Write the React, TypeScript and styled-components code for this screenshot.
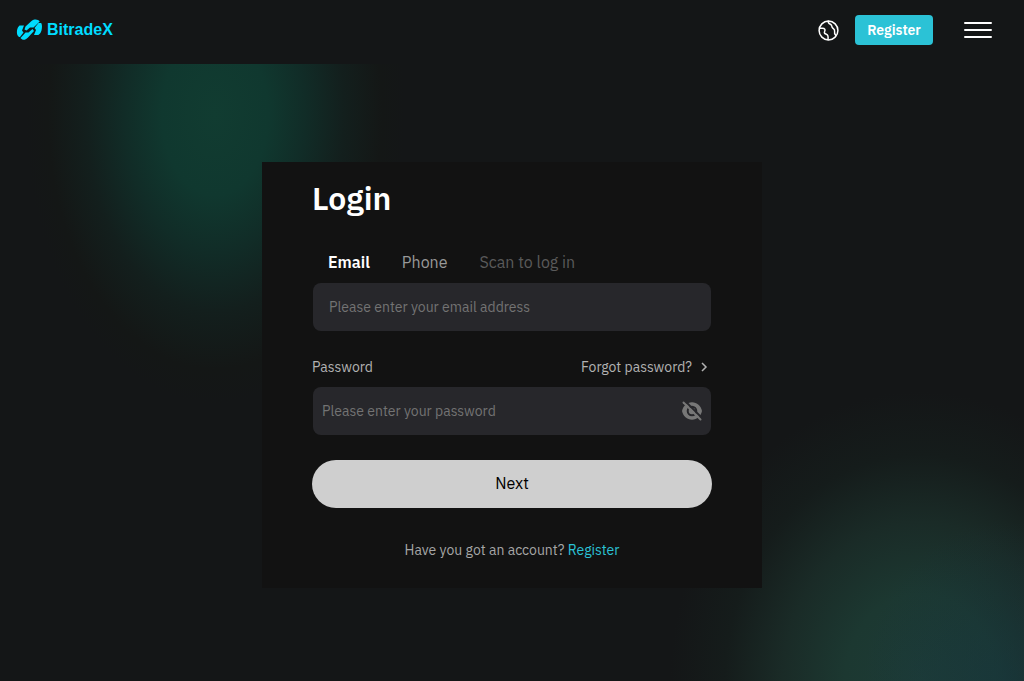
import React from "react";
import styled, { createGlobalStyle } from "styled-components";

const GlobalStyle = createGlobalStyle`
  *, *::before, *::after { box-sizing: border-box; }
  body {
    margin: 0;
    background: #141617;
    color: #fff;
    font-family: "IBM Plex Sans", Roboto, "Liberation Sans", sans-serif;
    font-size: 14px;
    line-height: 20px;
  }
  button, input { font: inherit; }
  a { text-decoration: none; }
`;

const Page = styled.div`
  min-height: 100vh;
  display: flex;
  flex-direction: column;
`;

const Header = styled.header`
  display: flex;
  align-items: center;
  justify-content: space-between;
  height: 64px;
  padding: 0 32px 4px 16px;
`;

const Brand = styled.a`
  display: flex;
  align-items: center;
  gap: 4px;
  color: #00dcff;
  font: bold 16px/24px "Liberation Sans", Arial, sans-serif;
`;

const HeaderActions = styled.div`
  display: flex;
  align-items: center;
`;

const IconButton = styled.button`
  display: flex;
  padding: 0;
  border: 0;
  background: none;
  color: inherit;
  cursor: pointer;
`;

const RegisterButton = styled.button`
  height: 30px;
  width: 78px;
  margin: 0 31px 0 16px;
  padding: 0;
  border: 0;
  border-radius: 4px;
  background: #2bc2d6;
  color: #fff;
  font-weight: 600;
  cursor: pointer;
`;

const Main = styled.main`
  flex: 1;
  display: flex;
  justify-content: center;
  align-items: flex-start;
  padding: 98px 16px 93px;
  background:
    radial-gradient(190px 290px at 215px 50px, #113c31 0%, #10382f 28%, #112c27 48%, #131f1d 68%, #141716 88%, rgba(20, 22, 23, 0) 100%),
    radial-gradient(140px 160px at calc(100% - 20px) 100%, rgba(20, 54, 70, 0.4), rgba(20, 54, 70, 0)),
    radial-gradient(250px 290px at calc(100% - 104px) 100%, #1d3b36 0%, #1c3831 30%, #1a2b27 55%, #151c1b 78%, #141617 100%);
`;

const Card = styled.form`
  width: 100%;
  max-width: 500px;
  padding: 16px 50px 28px;
  background: #121212;
`;

const Title = styled.h1`
  margin: 0 0 32px;
  font-size: 32px;
  line-height: 40px;
  font-weight: 600;
`;

const Tabs = styled.div`
  display: flex;
  gap: 32px;
  padding: 0 16px;
  margin-bottom: 9px;
`;

const Tab = styled.button<{ $tone: string; $active?: boolean }>`
  padding: 0;
  border: 0;
  background: none;
  color: ${(p) => p.$tone};
  font-size: 16px;
  line-height: 24px;
  font-weight: ${(p) => (p.$active ? 600 : 400)};
  cursor: pointer;
`;

const Field = styled.div<{ $inset: number }>`
  display: flex;
  align-items: center;
  height: 48px;
  margin: 0 1px;
  padding: 0 8px 0 ${(p) => p.$inset}px;
  border-radius: 8px;
  background: #27272b;
  color: #777;
`;

const Input = styled.input`
  flex: 1;
  min-width: 0;
  padding: 0;
  border: 0;
  outline: 0;
  background: none;
  color: #fff;
  &::placeholder { color: #737373; opacity: 1; }
`;

const LabelRow = styled.div`
  display: flex;
  justify-content: space-between;
  margin: 26px 0 10px;
  color: #b2b2b2;
`;

const ForgotLink = styled.a`
  display: flex;
  align-items: center;
  gap: 4px;
  color: inherit;
`;

const NextButton = styled.button`
  width: 100%;
  height: 48px;
  margin: 25px 0 32px;
  padding: 0 0 2px;
  border: 0;
  border-radius: 24px;
  background: #cfcfcf;
  color: #000;
  font-size: 16px;
  cursor: pointer;
`;

const Footnote = styled.p`
  margin: 0;
  text-align: center;
  color: #a6a6a6;
  a { color: #2bc2d6; }
`;

const Logo = () => (
  <svg width="27" height="24" viewBox="0 0 27 24" fill="currentColor" aria-hidden="true">
    <path d="M3.500 7.500H8L6 12.500 7.500 14.500 4 19H3C1 17.500 .7 15 1 12.500 1.300 10.200 2.300 8.500 3.500 7.500z" />
    <path d="M9.500 8.500L15.500 3C18.500 .8 22 1.200 23.700 3.500L17.500 9.500H14L10.500 12.500 8.500 11.500z" />
    <path d="M22.500 5h2.700c1 1.800 1 4.500.3 7.500-.8 2.500-2 3.800-3.200 4.500H18l2-5-1.500-2z" />
    <path d="M9.500 14.500h3l4-3.500 1.500 2-6 6.500C9 22.500 6.500 22.500 4.500 20z" />
  </svg>
);

const Globe = () => (
  <svg width="21" height="21" viewBox="0 0 21 21" fill="none" stroke="currentColor" strokeWidth="1.500" strokeLinecap="round" strokeLinejoin="round" aria-hidden="true">
    <circle cx="10.500" cy="10.500" r="9.400" />
    <path d="M1.500 8.200h3c2.200 0 3 1.300 2.200 3-.8 1.800 0 2.600 1.700 3 1.800.5 2 2 1.600 5.300M10.200 1.200c-.3 2 .6 2.400 2.200 3 2 .8.800 2.600 2.400 4 1.300 1 2.200 1.500 1.800 3.200-.4 1.600.1 2.800 1.300 4.200" />
  </svg>
);

const Menu = () => (
  <svg width="28" height="16" viewBox="0 0 28 16" stroke="currentColor" strokeWidth="2" strokeLinecap="round" aria-hidden="true">
    <path d="M1 1h26M1 8h26M1 15h26" />
  </svg>
);

const Chevron = () => (
  <svg width="16" height="16" viewBox="0 0 16 16" fill="none" stroke="currentColor" strokeWidth="1.500" aria-hidden="true">
    <path d="M6 4l4 4-4 4" />
  </svg>
);

const EyeOff = () => (
  <svg width="22" height="22" viewBox="0 0 22 22" fill="none" aria-hidden="true">
    <path d="M1 11c1-5 5-8.700 10-8.700s9 3.700 10 8.700c-1 5-5 8.700-10 8.700S2 16 1 11z" fill="currentColor" />
    <circle cx="11" cy="11" r="4.300" stroke="#27272b" strokeWidth="2" />
    <path d="M4 1l17 17" stroke="#27272b" strokeWidth="2" />
    <path d="M2.500 2.500l17 17" stroke="currentColor" strokeWidth="2" strokeLinecap="round" />
  </svg>
);

export default function App() {
  return (
    <Page>
      <GlobalStyle />
      <Header>
        <Brand href="#"><Logo />BitradeX</Brand>
        <HeaderActions>
          <IconButton type="button" aria-label="Language"><Globe /></IconButton>
          <RegisterButton type="button">Register</RegisterButton>
          <IconButton type="button" aria-label="Menu"><Menu /></IconButton>
        </HeaderActions>
      </Header>
      <Main>
        <Card onSubmit={(e) => e.preventDefault()}>
          <Title>Login</Title>
          <Tabs>
            <Tab type="button" $tone="#fff" $active>Email</Tab>
            <Tab type="button" $tone="#999">Phone</Tab>
            <Tab type="button" $tone="#5a5a5a">Scan to log in</Tab>
          </Tabs>
          <Field $inset={16}>
            <Input type="email" aria-label="Email" placeholder="Please enter your email address" />
          </Field>
          <LabelRow>
            <label htmlFor="password">Password</label>
            <ForgotLink href="#">Forgot password?<Chevron /></ForgotLink>
          </LabelRow>
          <Field $inset={9}>
            <Input id="password" type="password" placeholder="Please enter your password" />
            <IconButton type="button" aria-label="Show password"><EyeOff /></IconButton>
          </Field>
          <NextButton type="submit">Next</NextButton>
          <Footnote>Have you got an account? <a href="#">Register</a></Footnote>
        </Card>
      </Main>
    </Page>
  );
}
